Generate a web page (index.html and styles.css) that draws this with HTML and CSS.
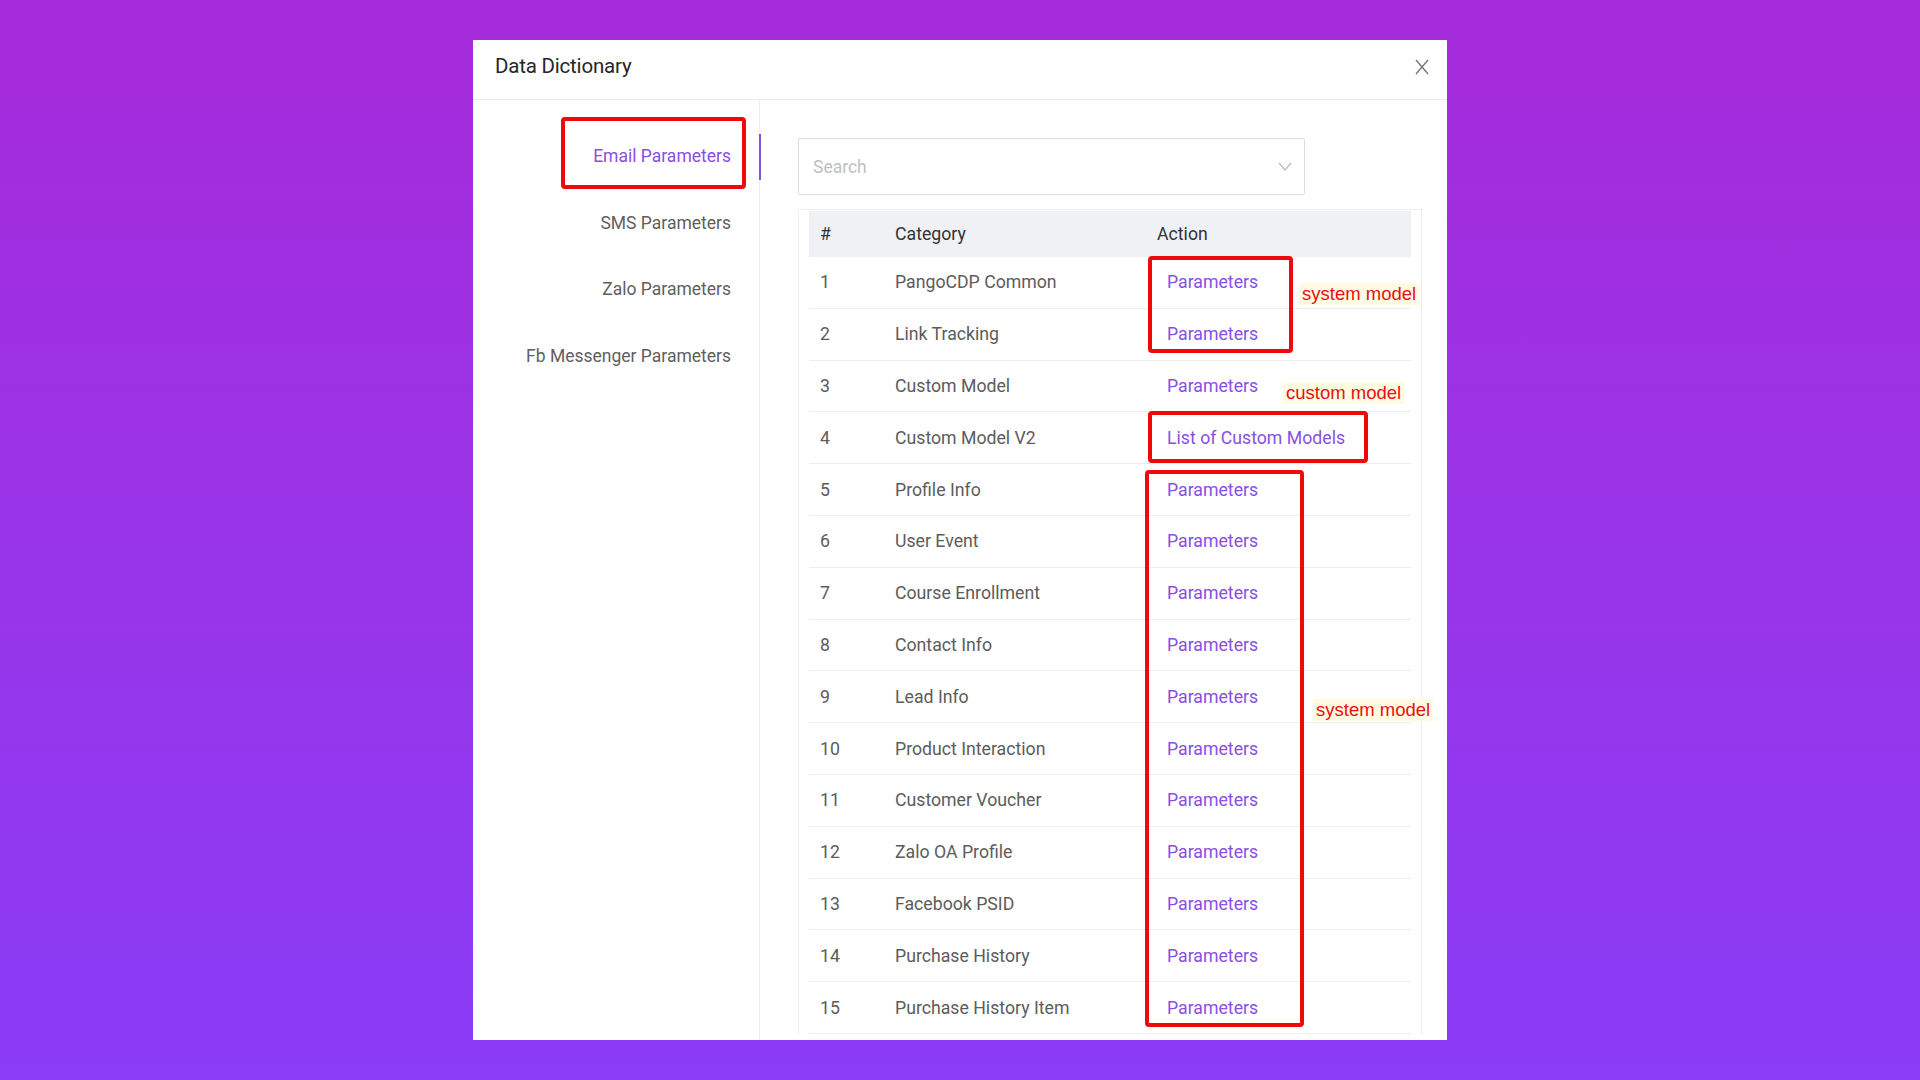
FILE: index.html
```html
<!DOCTYPE html>
<html lang="en">
<head>
    <meta charset="UTF-8">
    <meta name="viewport" content="width=device-width, initial-scale=1.0">
    <title>Data Dictionary</title>
    <link rel="stylesheet" href="styles.css">
</head>
<body>
    <div class="modal">
        <div class="modal-header">
            <span class="modal-title">Data Dictionary</span>
            <span class="close-btn">
                <svg width="14" height="16" viewBox="0 0 14 16"><path d="M1 1 L13 15 M13 1 L1 15" stroke="#7a7a7a" stroke-width="1.5" fill="none"/></svg>
            </span>
        </div>
        <div class="modal-body">
            <div class="tab-nav">
                <div class="tab active">Email Parameters</div>
                <div class="tab">SMS Parameters</div>
                <div class="tab">Zalo Parameters</div>
                <div class="tab">Fb Messenger Parameters</div>
            </div>
            <div class="tab-content">
                <div class="search-box">
                    <span class="placeholder">Search</span>
                    <svg class="chevron" width="14" height="9" viewBox="0 0 14 9"><path d="M1 1 L7 8 L13 1" stroke="#bdbdbd" stroke-width="1.3" fill="none"/></svg>
                </div>
                <div class="table-wrap">
                    <table class="dict-table">
                        <thead>
                            <tr><th class="col-num">#</th><th class="col-cat">Category</th><th>Action</th></tr>
                        </thead>
                        <tbody>
                            <tr><td>1</td><td>PangoCDP Common</td><td><a class="link">Parameters</a></td></tr>
                            <tr><td>2</td><td>Link Tracking</td><td><a class="link">Parameters</a></td></tr>
                            <tr><td>3</td><td>Custom Model</td><td><a class="link">Parameters</a></td></tr>
                            <tr><td>4</td><td>Custom Model V2</td><td><a class="link">List of Custom Models</a></td></tr>
                            <tr><td>5</td><td>Profile Info</td><td><a class="link">Parameters</a></td></tr>
                            <tr><td>6</td><td>User Event</td><td><a class="link">Parameters</a></td></tr>
                            <tr><td>7</td><td>Course Enrollment</td><td><a class="link">Parameters</a></td></tr>
                            <tr><td>8</td><td>Contact Info</td><td><a class="link">Parameters</a></td></tr>
                            <tr><td>9</td><td>Lead Info</td><td><a class="link">Parameters</a></td></tr>
                            <tr><td>10</td><td>Product Interaction</td><td><a class="link">Parameters</a></td></tr>
                            <tr><td>11</td><td>Customer Voucher</td><td><a class="link">Parameters</a></td></tr>
                            <tr><td>12</td><td>Zalo OA Profile</td><td><a class="link">Parameters</a></td></tr>
                            <tr><td>13</td><td>Facebook PSID</td><td><a class="link">Parameters</a></td></tr>
                            <tr><td>14</td><td>Purchase History</td><td><a class="link">Parameters</a></td></tr>
                            <tr><td>15</td><td>Purchase History Item</td><td><a class="link">Parameters</a></td></tr>
                        </tbody>
                    </table>
                </div>
            </div>
        </div>

        <!-- annotations drawn over the screenshot -->
        <div class="mark mark-email"></div>
        <div class="mark mark-system-top"></div>
        <div class="mark mark-custom-v2"></div>
        <div class="mark mark-system-list"></div>
        <div class="note note-system-top">system model</div>
        <div class="note note-custom">custom model</div>
        <div class="note note-system-list">system model</div>
    </div>
</body>
</html>
```

FILE: styles.css
```css
body {
    margin: 0;
    height: 100vh;
    overflow: hidden;
    background: linear-gradient(180deg, #a52ada 0%, #9a33e6 45%, #8a3cf7 100%);
    font-family: Roboto, 'Liberation Sans', sans-serif;
}

.modal {
    position: relative;
    width: 974px;
    height: 1000px;
    margin: 40px auto 0;
    background-color: #ffffff;
    overflow: hidden;
}

.modal-header {
    display: flex;
    align-items: center;
    justify-content: space-between;
    box-sizing: border-box;
    height: 60px;
    padding: 0 18px 8px 22px;
    border-bottom: 1px solid #ebebeb;
}

.modal-title {
    font-size: 20.5px;
    color: #262626;
    letter-spacing: -0.2px;
}

.close-btn {
    display: flex;
    padding-top: 2px;
}

.modal-body {
    display: flex;
}

.tab-nav {
    width: 286px;
    padding-top: 33.5px;
    border-right: 1px solid #ececec;
    min-height: 940px;
}

.tab {
    position: relative;
    text-align: right;
    padding: 9.5px 28px 9.5px 0;
    margin-bottom: 20.5px;
    line-height: 27px;
    font-size: 17.5px;
    color: #5f5f5f;
}

.tab.active {
    color: #8a4fe2;
}

.tab.active::after {
    content: "";
    position: absolute;
    top: 0;
    right: -2px;
    width: 2px;
    height: 100%;
    background-color: #8a4fe2;
}

.tab-content {
    padding: 38px 25px 0 38px;
    flex: 1;
}

.search-box {
    display: flex;
    align-items: center;
    justify-content: space-between;
    box-sizing: border-box;
    width: 507px;
    height: 57px;
    padding: 0 12px 0 14px;
    border: 1px solid #dcdcdc;
    border-radius: 2px;
}

.placeholder {
    font-size: 17.5px;
    color: #bfbfbf;
}

.table-wrap {
    margin-top: 14px;
    padding: 1px 10px 0;
    border: 1px solid #eeeeee;
    border-bottom: none;
}

.dict-table {
    width: 100%;
    border-collapse: collapse;
    font-size: 17.7px;
}

.dict-table th {
    height: 46px;
    padding: 0 0 0 11px;
    text-align: left;
    font-weight: 400;
    color: #333333;
    background-color: #f0f1f4;
}

.dict-table td {
    height: 50.8px;
    padding: 0 0 0 11px;
    color: #5c5c5c;
    border-bottom: 1px solid #ededed;
}

.col-num {
    width: 64px;
}

.col-cat {
    width: 251px;
}

.link {
    padding-left: 10px;
    color: #8a4fe2;
}

.mark {
    position: absolute;
    box-sizing: border-box;
    border: 4px solid #ee0a0a;
    border-radius: 4px;
}

.mark-email { left: 88px; top: 77px; width: 185px; height: 72px; }
.mark-system-top { left: 675px; top: 216px; width: 145px; height: 97px; }
.mark-custom-v2 { left: 675px; top: 371px; width: 220px; height: 52px; }
.mark-system-list { left: 672px; top: 430px; width: 159px; height: 557px; }

.note {
    position: absolute;
    height: 22px;
    padding: 0 3px;
    line-height: 22px;
    font-family: 'Liberation Sans Narrow', 'Liberation Sans', sans-serif;
    font-size: 18.5px;
    color: #e8100f;
    background-color: #fffbe2;
    white-space: nowrap;
}

.note-system-top { left: 826px; top: 243px; }
.note-custom { left: 810px; top: 342px; }
.note-system-list { left: 840px; top: 659px; }
```
